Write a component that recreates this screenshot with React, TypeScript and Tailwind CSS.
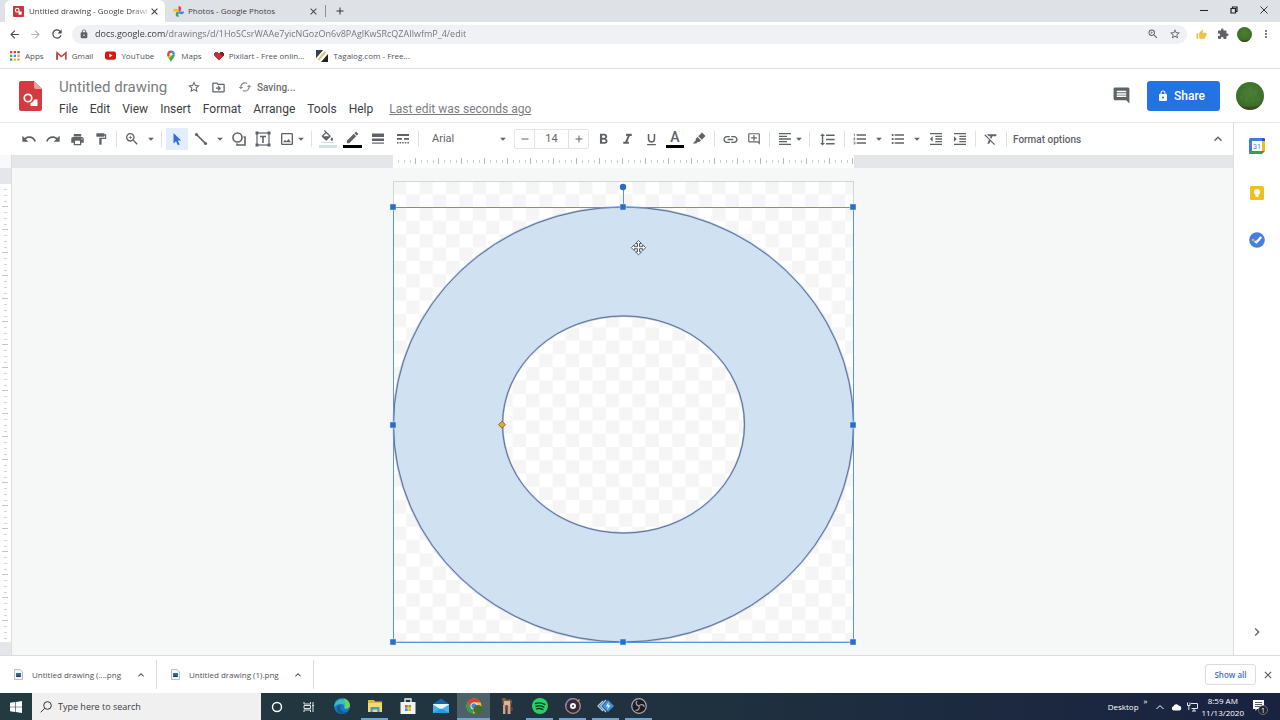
import React from 'react';
import {
  MdAdd,
  MdArrowBack,
  MdArrowDropDown,
  MdArrowForward,
  MdChevronRight,
  MdClose,
  MdComment,
  MdEdit,
  MdExpandLess,
  MdExtension,
  MdFormatAlignLeft,
  MdFormatBold,
  MdFormatClear,
  MdFormatColorFill,
  MdFormatIndentDecrease,
  MdFormatIndentIncrease,
  MdFormatItalic,
  MdFormatLineSpacing,
  MdFormatListBulleted,
  MdFormatListNumbered,
  MdFormatPaint,
  MdFormatUnderlined,
  MdLink,
  MdLock,
  MdMoreVert,
  MdOutlineAddComment,
  MdOutlineDriveFileMove,
  MdOutlineImage,
  MdPrint,
  MdRedo,
  MdRefresh,
  MdRemove,
  MdStarBorder,
  MdSync,
  MdThumbUp,
  MdUndo,
  MdZoomIn,
} from 'react-icons/md';

const bookmarks = [
  { label: 'Apps', icon: <AppsGrid /> },
  { label: 'Gmail', icon: <GmailLogo /> },
  { label: 'YouTube', icon: <YouTubeLogo /> },
  { label: 'Maps', icon: <MapsLogo /> },
  { label: 'Pixilart - Free onlin...', icon: <PixilartLogo /> },
  { label: 'Tagalog.com - Free...', icon: <TagalogLogo /> },
];

const menus = ['File', 'Edit', 'View', 'Insert', 'Format', 'Arrange', 'Tools', 'Help'];

const downloads = ['Untitled drawing (....png', 'Untitled drawing (1).png'];

/* ---------- logos ---------- */

function AppsGrid() {
  const colors = ['#db4437', '#db4437', '#c0392b', '#4caf50', '#4285f4', '#e8a33d', '#3c9a5f', '#e8b33d', '#e8a33d'];
  return (
    <svg viewBox="0 0 10 10" className="w-[10px] h-[10px]">
      {colors.map((c, i) => (
        <rect key={i} x={(i % 3) * 3.7} y={Math.floor(i / 3) * 3.7} width="2.3" height="2.3" fill={c} />
      ))}
    </svg>
  );
}

function GmailLogo() {
  return (
    <svg viewBox="0 0 12 10" className="w-[11px] h-[10px]">
      <path d="M1.2 9V1.6L6 5.6l4.8-4V9" fill="none" stroke="#d14836" strokeWidth="1.8" />
      <path d="M1.2 2.5V9" stroke="#b8483f" strokeWidth="1.8" />
    </svg>
  );
}

function YouTubeLogo() {
  return (
    <svg viewBox="0 0 12 9" className="w-[11px] h-[9px]">
      <rect width="12" height="9" rx="2.2" fill="#d9150f" />
      <path d="M4.7 2.4 8.2 4.5 4.7 6.6z" fill="#fff" />
    </svg>
  );
}

function MapsLogo() {
  return (
    <svg viewBox="0 0 10 12" className="w-[10px] h-3">
      <path d="M5 12C4.3 9.4 1.2 7.5 1.2 4.2h7.6C8.8 7.5 5.7 9.4 5 12z" fill="#34a853" />
      <path d="M1.2 4.2A3.8 3.8 0 0 1 5 .4v4.1L2.2 7a5 5 0 0 1-1-2.800z" fill="#ea4335" />
      <path d="M5 .4a3.8 3.8 0 0 1 3.8 3.8H5z" fill="#4285f4" />
      <path d="M2 6.7l3-2.900 1 1.600-2.700 3.200z" fill="#fbbc04" />
      <circle cx="5" cy="4.2" r="1.4" fill="#fff" />
    </svg>
  );
}

function PixilartLogo() {
  return (
    <svg viewBox="0 0 10 9" className="w-[10px] h-[9px]">
      <path d="M1 1h3v1h2V1h3v1h1v3H9v1H8v1H7v1H6v1H4V8H3V7H2V6H1V5H0V2h1z" fill="#c5303c" />
      <path d="M6 1h3v1h1v3H9L6 3z" fill="#7e2030" />
    </svg>
  );
}

function TagalogLogo() {
  return (
    <svg viewBox="0 0 12 12" className="w-3 h-3">
      <path d="M0 0h7L0 8z" fill="#26417a" />
      <path d="M2.5 0H7L0 8V5z" fill="#3d3d3d" />
      <path d="M8.5 1L10 3l-7 8-1.500-2z" fill="#d9c98a" />
      <path d="M12 4v8H5z" fill="#222" />
    </svg>
  );
}

function DrawingsFavicon() {
  return (
    <svg viewBox="0 0 12 12" className="w-[11px] h-[11px] shrink-0">
      <rect width="12" height="12" rx="1" fill="#c9373b" />
      <circle cx="4.6" cy="4.6" r="2" fill="none" stroke="#fff" strokeWidth="1.2" />
      <path d="M6 6h3.500v3.500H6z" fill="#fff" />
    </svg>
  );
}

function PhotosFavicon() {
  return (
    <svg viewBox="0 0 12 12" className="w-[11px] h-[11px] shrink-0">
      <path d="M6 0a3 3 0 0 1 0 6z" fill="#ea4335" />
      <path d="M12 6a3 3 0 0 1-6 0z" fill="#4285f4" />
      <path d="M6 12a3 3 0 0 1 0-6z" fill="#34a853" />
      <path d="M0 6a3 3 0 0 1 6 0z" fill="#fbbc04" />
    </svg>
  );
}

function DrawingsLogo() {
  return (
    <svg viewBox="0 0 23 30" className="w-[23px] h-[30px]">
      <path d="M2 0h13l8 8v20a2 2 0 0 1-2 2H2a2 2 0 0 1-2-2V2a2 2 0 0 1 2-2z" fill="#d23b40" />
      <path d="M15 0l8 8h-6a2 2 0 0 1-2-2z" fill="#efa3a0" />
      <circle cx="9" cy="17" r="3.7" fill="none" stroke="#fff" strokeWidth="1.7" />
      <path d="M18.500 18.500v6.500H11.500v-3a5.500 5.500 0 0 0 3.800-3.500z" fill="#fff" />
    </svg>
  );
}

function Avatar({ className }: { className: string }) {
  return (
    <svg viewBox="0 0 28 28" className={className}>
      <defs>
        <radialGradient id="grass" cx="50%" cy="40%" r="60%">
          <stop offset="0" stopColor="#4a8033" />
          <stop offset="0.8" stopColor="#3d6f2a" />
          <stop offset="1" stopColor="#345925" />
        </radialGradient>
      </defs>
      <circle cx="14" cy="14" r="14" fill="url(#grass)" />
      <path d="M5 24.500h18A14 14 0 0 1 5 24.500z" fill="#4b4429" />
      <path d="M8 8l1 3M14 5l1 4M19 9l1 4M10 16l1 3M17 17l1 3M5 14l1 3M22 16l1 3" stroke="#548a3a" strokeWidth="0.6" />
    </svg>
  );
}

/* ---------- toolbar glyphs ---------- */

function PointerIcon() {
  return (
    <svg viewBox="0 0 14 14" className="w-[14px] h-[14px]">
      <path d="M3.500 1v10.500L6 9.300l1.900 4 1.800-.8-1.900-3.900h3.400z" fill="#2f6fd8" />
    </svg>
  );
}

function LineIcon() {
  return (
    <svg viewBox="0 0 14 14" className="w-[14px] h-[14px]">
      <path d="M2.500 2.500l9 9" stroke="currentColor" strokeWidth="1.7" />
      <circle cx="2.5" cy="2.5" r="1.6" fill="currentColor" />
      <circle cx="11.5" cy="11.5" r="1.6" fill="currentColor" />
    </svg>
  );
}

function ShapeIcon() {
  return (
    <svg viewBox="0 0 14 14" className="w-[14px] h-[14px]" fill="none" stroke="currentColor" strokeWidth="1.6">
      <circle cx="5.5" cy="5.5" r="4.5" />
      <path d="M11.500 5H13v8H5v-1.500" />
    </svg>
  );
}

function TextBoxIcon() {
  return (
    <svg viewBox="0 0 16 16" className="w-4 h-4" fill="none" stroke="currentColor">
      <rect x="2" y="2" width="12" height="12" strokeWidth="1.2" />
      <path d="M5 5.500h6M8 5.500V12" strokeWidth="1.6" />
      <g fill="currentColor" stroke="none">
        <rect x="0.5" y="0.5" width="3" height="3" />
        <rect x="12.5" y="0.5" width="3" height="3" />
        <rect x="0.5" y="12.5" width="3" height="3" />
        <rect x="12.5" y="12.5" width="3" height="3" />
      </g>
    </svg>
  );
}

function WeightIcon() {
  return (
    <svg viewBox="0 0 12 12" className="w-3 h-3" fill="currentColor">
      <rect y="0.5" width="12" height="3.5" />
      <rect y="5.5" width="12" height="2.5" />
      <rect y="9.5" width="12" height="1.2" />
    </svg>
  );
}

function DashIcon() {
  return (
    <svg viewBox="0 0 12 12" className="w-3 h-3" fill="currentColor">
      <path d="M0 1h12v2H0zM0 5h5v1.800H0zM7 5h5v1.800H7zM0 9h1.500v1.500H0zM2.600 9h1.500v1.500H2.600zM5.200 9h1.500v1.500H5.200zM7.800 9h1.500v1.500H7.800zM10.400 9h1.500v1.500h-1.500z" />
    </svg>
  );
}

function HighlightIcon() {
  return (
    <svg viewBox="0 0 14 14" className="w-[14px] h-[14px]" fill="currentColor">
      <path d="M10 .5L13.500 4 9.800 7.700 6.300 4.200z" />
      <path d="M5.500 5L9 8.500l-1.800 1.600H5.500l-1.200 1.400H.8l2.900-3V6.700z" />
    </svg>
  );
}

function ToolButton({ label, className = 'w-6', children }: { label: string; className?: string; children: React.ReactNode }) {
  return (
    <button aria-label={label} className={`h-[22px] flex items-center justify-center shrink-0 ${className}`}>
      {children}
    </button>
  );
}

function Caret({ label, className = '' }: { label: string; className?: string }) {
  return (
    <button aria-label={label} className={`w-[14px] h-[22px] flex items-center justify-center shrink-0 ${className}`}>
      <MdArrowDropDown className="w-[14px] h-[14px] shrink-0" />
    </button>
  );
}

function Sep() {
  return <span className="w-px h-4 mx-[3px] bg-[#dfe1e5] shrink-0" />;
}

/* ---------- browser chrome ---------- */

function TabStrip() {
  return (
    <div className="h-[22px] bg-[#dee1e6] flex justify-between text-[8px] text-[#3f4246]">
      <div className="flex items-center pl-[5px]">
        <div className="w-[160px] h-full bg-white rounded-t-md flex items-center pl-2 pr-[5px]">
          <DrawingsFavicon />
          <span className="ml-[5px] flex-1 whitespace-nowrap [mask-image:linear-gradient(90deg,#000_85%,#0003)]">
            Untitled drawing - Google Drawi
          </span>
          <button aria-label="Close tab">
            <MdClose className="w-[11px] h-[11px] text-[#333]" />
          </button>
        </div>
        <div className="w-[160px] h-full flex items-center pl-2 pr-[6px]">
          <PhotosFavicon />
          <span className="ml-1 flex-1 whitespace-nowrap">Photos - Google Photos</span>
          <button aria-label="Close tab">
            <MdClose className="w-[11px] h-[11px] text-[#444]" />
          </button>
        </div>
        <span className="w-px h-3 bg-[#8d9095]" />
        <button aria-label="New tab" className="ml-2">
          <MdAdd className="w-3 h-3 text-[#333]" />
        </button>
      </div>
      <div className="flex items-center gap-[22px] pr-3 pb-[2px] text-[#222]">
        <button aria-label="Minimize">
          <svg viewBox="0 0 8 8" className="w-2 h-2">
            <path d="M0 4.500h8" stroke="currentColor" />
          </svg>
        </button>
        <button aria-label="Restore">
          <svg viewBox="0 0 8 8" className="w-2 h-2" fill="none" stroke="currentColor" strokeWidth="1.2">
            <path d="M1 2.500h4.500V7H1zM2.500 2.500V1H7v4.500H5.500" />
          </svg>
        </button>
        <button aria-label="Close window">
          <svg viewBox="0 0 8 8" className="w-2 h-2">
            <path d="M.5.5l7 7M7.500.5l-7 7" stroke="currentColor" strokeWidth="0.9" />
          </svg>
        </button>
      </div>
    </div>
  );
}

function AddressBar() {
  return (
    <div className="h-6 flex items-center bg-white pl-2 pr-2 text-[#5f6368]">
      <button aria-label="Back" className="mr-2">
        <MdArrowBack className="w-[13px] h-[13px] text-[#4a4d51]" />
      </button>
      <button aria-label="Forward" className="mr-2">
        <MdArrowForward className="w-[13px] h-[13px] text-[#b3b5b8]" />
      </button>
      <button aria-label="Reload" className="mr-2">
        <MdRefresh className="w-[14px] h-[14px] text-[#4a4d51]" />
      </button>
      <div className="flex-1 h-[19px] rounded-full bg-[#f0f1f4] flex items-center pl-[7px] pr-[6px]">
        <MdLock className="w-[10px] h-[10px]" />
        <input
          aria-label="Address"
          defaultValue="docs.google.com/drawings/d/1HoSCsrWAAe7yicNGozOn6v8PAglKwSRcQZAIlwfmP_4/edit"
          className="ml-[6px] flex-1 text-[9px] outline-none bg-[linear-gradient(90deg,#33363a_70px,#6c7075_70px)] bg-clip-text text-transparent"
        />
        <button aria-label="Zoom">
          <MdZoomIn className="w-3 h-3" />
        </button>
        <button aria-label="Bookmark this page" className="ml-[10px]">
          <MdStarBorder className="w-3 h-3" />
        </button>
      </div>
      <button aria-label="Thumbs up extension" className="ml-[9px]">
        <MdThumbUp className="w-[11px] h-[11px] text-[#efc04a]" />
      </button>
      <button aria-label="Extensions" className="ml-[10px]">
        <MdExtension className="w-3 h-3" />
      </button>
      <button aria-label="Profile" className="ml-2">
        <Avatar className="w-[15px] h-[15px]" />
      </button>
      <button aria-label="Browser menu" className="ml-2">
        <MdMoreVert className="w-3 h-3" />
      </button>
    </div>
  );
}

function BookmarksBar() {
  return (
    <nav className="h-[23px] flex items-center gap-3 pl-[10px] pb-[3px] bg-white border-b border-[#dcdee1] text-[8px] text-[#4f5257]">
      {bookmarks.map((b) => (
        <a key={b.label} href="#" className="flex items-center gap-[5px] whitespace-nowrap">
          {b.icon}
          {b.label}
        </a>
      ))}
    </nav>
  );
}

/* ---------- document ---------- */

function DocHeader() {
  return (
    <header className="h-[54px] flex items-center bg-white border-b border-[#e3e5e8] pl-[19px] pr-4 font-[Roboto,sans-serif]">
      <DrawingsLogo />
      <div className="ml-[17px] pt-1 flex flex-col gap-px">
        <div className="flex items-center h-[22px] text-[#5f6368]">
          <input
            aria-label="Document title"
            defaultValue="Untitled drawing"
            className="w-[120px] text-[15px] leading-5 text-[#7b7d80] outline-none"
          />
          <button aria-label="Star" className="ml-2">
            <MdStarBorder className="w-[14px] h-[14px]" />
          </button>
          <button aria-label="Move" className="ml-[10px]">
            <MdOutlineDriveFileMove className="w-[15px] h-[15px]" />
          </button>
          <MdSync className="ml-3 w-[14px] h-[14px] rotate-90 text-[#8b8e92]" />
          <span className="ml-[5px] text-[10px] font-medium text-[#6b6e72]">Saving...</span>
        </div>
        <nav className="flex items-center h-5 gap-3 text-[12px] text-[#3c4043]">
          {menus.map((m) => (
            <button key={m}>{m}</button>
          ))}
          <a href="#" className="ml-1 text-[#7b7d80] underline">
            Last edit was seconds ago
          </a>
        </nav>
      </div>
      <button aria-label="Open comment history" className="ml-auto">
        <MdComment className="w-[19px] h-[19px] text-[#5f6368]" />
      </button>
      <button className="ml-4 w-[73px] h-[30px] rounded-[3px] bg-[#2373e2] text-white text-[12px] font-medium flex items-center pl-[10px] gap-[5px]">
        <MdLock className="w-3 h-3" />
        Share
      </button>
      <button aria-label="Account" className="ml-4">
        <Avatar className="w-7 h-7" />
      </button>
    </header>
  );
}

function Toolbar() {
  return (
    <div className="h-8 flex items-center bg-white pl-[17px] pr-[7px] text-[#5f6368] font-[Roboto,sans-serif]">
      <ToolButton label="Undo"><MdUndo className="w-4 h-4" /></ToolButton>
      <ToolButton label="Redo"><MdRedo className="w-4 h-4" /></ToolButton>
      <ToolButton label="Print"><MdPrint className="w-[15px] h-[15px]" /></ToolButton>
      <ToolButton label="Paint format"><MdFormatPaint className="w-[14px] h-[14px]" /></ToolButton>
      <Sep />
      <ToolButton label="Zoom"><MdZoomIn className="w-4 h-4" /></ToolButton>
      <Caret label="Zoom levels" />
      <Sep />
      <ToolButton label="Select" className="w-6 px-px">
        <span className="flex h-full w-full items-center justify-center bg-[#e4edfb]"><PointerIcon /></span>
      </ToolButton>
      <ToolButton label="Line"><LineIcon /></ToolButton>
      <Caret label="Line types" />
      <ToolButton label="Shape"><ShapeIcon /></ToolButton>
      <ToolButton label="Text box"><TextBoxIcon /></ToolButton>
      <ToolButton label="Image"><MdOutlineImage className="w-4 h-4" /></ToolButton>
      <Caret label="Image sources" className="-ml-[5px]" />
      <Sep />
      <ToolButton label="Fill color" className="w-[25px] flex-col">
        <MdFormatColorFill className="w-[15px] h-[15px] [clip-path:inset(0_0_16%_0)]" />
        <span className="w-[18px] h-[3px] bg-[#cfe2f3]" />
      </ToolButton>
      <ToolButton label="Border color" className="w-[25px] flex-col">
        <MdEdit className="w-[15px] h-[15px]" />
        <span className="w-[19px] h-[3px] bg-black" />
      </ToolButton>
      <ToolButton label="Border weight" className="w-[25px]"><WeightIcon /></ToolButton>
      <ToolButton label="Border dash" className="w-[25px]"><DashIcon /></ToolButton>
      <Sep />
      <label className="w-[88px] h-[22px] flex items-center pl-[10px] shrink-0 text-[11px]">
        <select aria-label="Font" className="appearance-none flex-1 outline-none">
          <option>Arial</option>
        </select>
        <MdArrowDropDown className="w-[14px] h-[14px]" />
      </label>
      <div className="ml-1 mr-[2px] flex h-5 w-[75px] shrink-0 border border-[#e2e4e7] rounded-[2px]">
        <button aria-label="Decrease font size" className="w-[19px] flex items-center justify-center"><MdRemove className="w-3 h-3" /></button>
        <input aria-label="Font size" defaultValue="14" className="flex-1 min-w-0 border-x border-[#e2e4e7] text-center text-[11px] outline-none" />
        <button aria-label="Increase font size" className="w-[19px] flex items-center justify-center"><MdAdd className="w-3 h-3" /></button>
      </div>
      <ToolButton label="Bold"><MdFormatBold className="w-[17px] h-[17px]" /></ToolButton>
      <ToolButton label="Italic"><MdFormatItalic className="w-[17px] h-[17px]" /></ToolButton>
      <ToolButton label="Underline"><MdFormatUnderlined className="w-[15px] h-[15px]" /></ToolButton>
      <ToolButton label="Text color" className="w-6 flex-col">
        <span className="text-[14px] leading-[15px] font-medium">A</span>
        <span className="w-[18px] h-[3px] bg-black" />
      </ToolButton>
      <ToolButton label="Highlight color"><HighlightIcon /></ToolButton>
      <Sep />
      <ToolButton label="Insert link"><MdLink className="w-[17px] h-[17px]" /></ToolButton>
      <ToolButton label="Add comment"><MdOutlineAddComment className="w-[14px] h-[14px]" /></ToolButton>
      <Sep />
      <ToolButton label="Align"><MdFormatAlignLeft className="w-4 h-4" /></ToolButton>
      <Caret label="Align options" className="-ml-[5px]" />
      <Sep />
      <ToolButton label="Line spacing" className="w-7"><MdFormatLineSpacing className="w-[17px] h-[17px]" /></ToolButton>
      <Sep />
      <ToolButton label="Numbered list"><MdFormatListNumbered className="w-4 h-4" /></ToolButton>
      <Caret label="Numbered list options" />
      <ToolButton label="Bulleted list"><MdFormatListBulleted className="w-4 h-4" /></ToolButton>
      <Caret label="Bulleted list options" />
      <ToolButton label="Decrease indent"><MdFormatIndentDecrease className="w-4 h-4" /></ToolButton>
      <ToolButton label="Increase indent"><MdFormatIndentIncrease className="w-4 h-4" /></ToolButton>
      <Sep />
      <ToolButton label="Clear formatting"><MdFormatClear className="w-4 h-4" /></ToolButton>
      <Sep />
      <button className="ml-[3px] text-[10px] font-medium whitespace-nowrap">Format options</button>
      <button aria-label="Hide the menus" className="ml-auto">
        <MdExpandLess className="w-4 h-4" />
      </button>
    </div>
  );
}

function HorizontalRuler() {
  return (
    <svg className="w-[461px] h-[13px] bg-white shrink-0">
      <defs>
        <pattern id="hticks" width="23" height="13" patternUnits="userSpaceOnUse">
          <path d="M5.500 5v3M11.500 5v3M17.500 5v3" stroke="#ced0d3" />
          <path d="M22.500 3v6" stroke="#b6b8bb" />
        </pattern>
      </defs>
      <rect width="100%" height="100%" fill="url(#hticks)" />
    </svg>
  );
}

function VerticalRuler() {
  return (
    <svg className="w-full h-full bg-white">
      <defs>
        <pattern id="vticks" width="11" height="23" patternUnits="userSpaceOnUse">
          <path d="M4 5.500h3M4 11.500h3M4 17.500h3" stroke="#d3d5d8" />
          <path d="M2 22.500h6" stroke="#c3c5c8" />
        </pattern>
      </defs>
      <rect width="100%" height="100%" fill="url(#vticks)" />
    </svg>
  );
}

const RING =
  'M.5 243.500a230 217.500 0 1 0 460 0a230 217.500 0 1 0 -460 0zM109.500 243.500a121 108.500 0 1 1 242 0a121 108.500 0 1 1 -242 0z';

function Drawing() {
  const handles = [
    [0, 26], [230, 26], [460, 26],
    [0, 244], [460, 244],
    [0, 461], [230, 461], [460, 461],
  ];
  return (
    <svg viewBox="0 0 461 461" className="w-[461px] h-[461px] overflow-visible shrink-0">
      <defs>
        <pattern id="checker" width="26.6" height="26.6" patternUnits="userSpaceOnUse">
          <rect width="26.6" height="26.6" fill="#fff" />
          <path d="M0 0h13.300v13.300H0zM13.300 13.300h13.300v13.300H13.300z" fill="#f5f5f5" />
        </pattern>
      </defs>
      <rect x="0.5" y="0.5" width="460" height="460" fill="url(#checker)" stroke="#d3d5d6" />
      <path d={RING} fill="#d0e1f1" fillRule="evenodd" stroke="#a9c4e8" strokeWidth="2" />
      <path d={RING} fill="none" stroke="#5d6780" strokeWidth="0.9" />
      <path d="M.5 26.500h460v435H.5zM230.500 6v20" fill="none" stroke="#5b93dc" />
      <circle cx="230" cy="6" r="3.2" fill="#2a6dc9" />
      {handles.map(([x, y]) => (
        <rect key={`${x}-${y}`} x={x - 3} y={y - 3} width="6" height="6" fill="#2a6dc9" stroke="#dbe8f8" strokeWidth="0.5" />
      ))}
      <path d="M109 240.200l3.500 3.500-3.500 3.500-3.500-3.500z" fill="#dcae2c" stroke="#7a6424" strokeWidth="0.9" />
      {/* four way move cursor */}
      <path
        d="M245.500 59.500l3 3h-2v3.200h3.200v-2l3 3-3 3v-2h-3.200v3.200h2l-3 3-3-3h2v-3.200h-3.200v2l-3-3 3-3v2h3.200v-3.200h-2z"
        fill="#fff"
        stroke="#4a4d52"
        strokeWidth="0.9"
      />
    </svg>
  );
}

function Workspace() {
  return (
    <main className="flex-1 min-w-0 flex flex-col">
      <Toolbar />
      <div className="h-[13px] flex shrink-0">
        <span className="w-3 border-r border-[#dcdee1] bg-[#f8f9fa]" />
        <div className="flex-1 flex justify-center pl-[2px] bg-[#e5e6ea]">
          <HorizontalRuler />
        </div>
      </div>
      <div className="flex-1 flex">
        <div className="w-3 shrink-0 flex flex-col bg-[#e5e6ea] border-r border-[#dcdee1] pt-4 pb-[13px]">
          <div className="flex-1">
            <VerticalRuler />
          </div>
        </div>
        <div className="flex-1 flex justify-center bg-[#f6f8f8] pl-[2px] py-[13px]">
          <Drawing />
        </div>
      </div>
    </main>
  );
}

function SidePanel() {
  return (
    <aside className="w-[47px] shrink-0 flex flex-col items-center bg-white border-l border-[#dcdee1] pt-[15px] pb-[15px]">
      <div className="flex flex-col gap-[31px]">
        <button aria-label="Calendar">
          <svg viewBox="0 0 16 16" className="w-4 h-4">
            <rect width="16" height="16" rx="1.5" fill="#3f7de0" />
            <path d="M13 3h3v10h-3z" fill="#f2bc1d" />
            <path d="M0 13h13v3H1.500A1.500 1.500 0 0 1 0 14.500z" fill="#31a350" />
            <path d="M13 0h1.500A1.500 1.500 0 0 1 16 1.500V3h-3z" fill="#2457a8" />
            <path d="M13 13h3l-3 3z" fill="#d8483b" />
            <path d="M16 13v3h-3z" fill="#fff" />
            <rect x="3" y="3" width="10" height="10" fill="#fff" />
            <text x="8" y="10.7" textAnchor="middle" fontSize="7" fontFamily="Roboto, sans-serif" fill="#3f7de0">31</text>
          </svg>
        </button>
        <button aria-label="Keep">
          <svg viewBox="0 0 16 16" className="w-4 h-4">
            <rect x="1" y="1" width="14" height="14" rx="1.5" fill="#efbe22" />
            <circle cx="8" cy="7" r="3" fill="#fffbe8" />
            <path d="M6.500 9h3v3h-3z" fill="#fffbe8" />
          </svg>
        </button>
        <button aria-label="Tasks">
          <svg viewBox="0 0 16 16" className="w-4 h-4">
            <circle cx="8" cy="8" r="7.8" fill="#4680de" />
            <circle cx="4" cy="8" r="1.3" fill="#e3b63a" />
            <path d="M5.500 9l1.600 1.600" stroke="#c9dcf8" strokeWidth="2" />
            <path d="M6.800 11l5.400-6" stroke="#fff" strokeWidth="2.4" />
          </svg>
        </button>
      </div>
      <button aria-label="Hide side panel" className="mt-auto">
        <MdChevronRight className="w-4 h-4 text-[#5f6368]" />
      </button>
    </aside>
  );
}

/* ---------- bottom bars ---------- */

function DownloadsBar() {
  return (
    <div className="h-[38px] flex items-center bg-white border-t border-[#d9dbde] text-[8px] text-[#4f5257] pr-[6px]">
      {downloads.map((name) => (
        <div key={name} className="w-[157px] h-[29px] flex items-center pl-[14px] pr-[9px] border-r border-[#d9dbde]">
          <svg viewBox="0 0 9 11" className="w-[9px] h-[11px] shrink-0">
            <path d="M.5.5H6L8.500 3v7.500h-8z" fill="#f4f6f9" stroke="#a9b0ba" strokeWidth="0.8" />
            <rect x="2" y="4" width="5" height="4" fill="#2d6cb5" />
            <path d="M2 8l2-2 3 2z" fill="#243b53" />
          </svg>
          <button className="ml-[9px] flex-1 text-left whitespace-nowrap">{name}</button>
          <button aria-label="Download options">
            <MdExpandLess className="w-3 h-3" />
          </button>
        </div>
      ))}
      <button className="ml-auto w-[51px] h-[21px] border border-[#dadce0] rounded-[3px] text-[#4370c4] font-semibold">
        Show all
      </button>
      <button aria-label="Close downloads bar" className="ml-[6px]">
        <MdClose className="w-3 h-3" />
      </button>
    </div>
  );
}

const taskApps = [
  {
    name: 'Edge',
    art: (
      <>
        <circle cx="9" cy="9" r="8" fill="#1b78c8" />
        <path d="M1.500 8A8 8 0 0 1 17 8.500c0 3-4 4-6 2.500 1-1 .6-3.500-2-4-3-.5-6 .5-7.500 3z" fill="#36c2b4" />
        <path d="M10 1.200a8 8 0 0 1 7 7.300c0 2.500-3 3.500-5.500 2.800C13 8 13 4 10 1.200z" fill="#6bd45c" />
        <path d="M7 10c0 4 4 5.500 8 4.500-3 3.500-9 3-11-1-.8-3 1-5.500 4-5.500-.6.6-1 1.200-1 2z" fill="#155a9e" />
      </>
    ),
  },
  {
    name: 'File Explorer',
    running: true,
    art: (
      <>
        <path d="M2 3h6l1 1.500h7V15H2z" fill="#e5b541" />
        <path d="M2 6h14v9H2z" fill="#f7d775" />
        <path d="M4.500 15v-5h9v5h-2.200v-2.500H6.700V15z" fill="#4b9bc9" />
      </>
    ),
  },
  {
    name: 'Store',
    art: (
      <>
        <path d="M6 5V2h6v3" fill="none" stroke="#f2f2f2" strokeWidth="1.3" />
        <path d="M1.500 5h15v12h-15z" fill="#f2f2f2" />
        <path d="M6 8h2.700v2.700H6z" fill="#e8512f" />
        <path d="M9.300 8H12v2.700H9.300z" fill="#7fba00" />
        <path d="M6 11.300h2.700V14H6z" fill="#2d9fe0" />
        <path d="M9.300 11.300H12V14H9.300z" fill="#f5b400" />
      </>
    ),
  },
  {
    name: 'Mail',
    art: (
      <>
        <path d="M1 7l8-5.500L17 7v9H1z" fill="#1767b0" />
        <path d="M1 7h16v2l-8 4-8-4z" fill="#e8f4fb" />
        <path d="M1 7.500l8 5 8-5V16H1z" fill="#41b4ea" />
        <path d="M1 16l8-4.500 8 4.500z" fill="#2b97dc" />
      </>
    ),
  },
  {
    name: 'Chrome',
    running: true,
    active: true,
    art: (
      <>
        <circle cx="9" cy="9" r="7.5" fill="#f3c22c" />
        <path d="M2.500 5.300a7.500 7.500 0 0 1 13 0H9l-3 5.400z" fill="#dc4336" />
        <path d="M2.500 5.300L6 10.700l3 1.800-1.200 3.900A7.500 7.500 0 0 1 2.500 5.300z" fill="#2f9e50" />
        <circle cx="9" cy="9" r="3.5" fill="#fff" />
        <circle cx="9" cy="9" r="2.7" fill="#4384ee" />
        <circle cx="13" cy="12.5" r="4.6" fill="#42702c" />
      </>
    ),
  },
  {
    name: 'Game',
    art: (
      <>
        <path d="M4 1h3l2 2 3-1 2 2-1 5H5z" fill="#8a5a41" />
        <path d="M6 4h6v5H6z" fill="#d8b49a" />
        <path d="M5 8h2.500v9H5zM9.500 8h3v9h-3z" fill="#c9a48c" />
        <path d="M7.500 8h2v5h-2z" fill="#6d4638" />
        <path d="M13 10h2v4h-2z" fill="#75343a" />
      </>
    ),
  },
  {
    name: 'Spotify',
    running: true,
    art: (
      <>
        <circle cx="9" cy="9" r="8" fill="#27d365" />
        <path d="M4.500 6.500c3-1 6.500-.7 9.300.9M5 9.300c2.500-.8 5.500-.5 7.800.8M5.500 11.900c2-.6 4.500-.4 6.300.7" fill="none" stroke="#16332a" strokeWidth="1.4" strokeLinecap="round" />
      </>
    ),
  },
  {
    name: 'Groove',
    running: true,
    art: (
      <>
        <circle cx="9" cy="9" r="7.3" fill="#2f2c3a" stroke="#b88a90" strokeWidth="1.3" />
        <path d="M9 1.700A7.300 7.300 0 0 0 1.700 9" fill="none" stroke="#8a7cc0" strokeWidth="1.3" />
        <path d="M13.500 4.500l2-2" stroke="#e69560" strokeWidth="1.5" />
        <circle cx="9" cy="9" r="3" fill="#f4f1f2" />
        <circle cx="9" cy="9" r="1" fill="#2f2c3a" />
      </>
    ),
  },
  {
    name: 'Sync',
    running: true,
    art: (
      <>
        <path d="M6 4L1 9l5 5M9 3L3.500 9 9 15" fill="none" stroke="#a8cdea" strokeWidth="1.3" />
        <path d="M11 3l6 6-6 6-6-6z" fill="#3f93dc" />
        <path d="M11.500 5L9 9.500h2L10 13l3.500-4.700h-2z" fill="#d9eeff" />
      </>
    ),
  },
  {
    name: 'OBS',
    running: true,
    art: (
      <>
        <circle cx="9" cy="9" r="7.3" fill="#1d1d21" stroke="#a9adb3" strokeWidth="1.2" />
        <path d="M9 9c-3-.5-3.500-3-2-5M9 9c2-2.200 4.800-1.500 5.300.8M9 9c1 2.800-1 4.800-3.500 4.200" fill="none" stroke="#9da0a6" strokeWidth="1.3" />
      </>
    ),
  },
];

function Taskbar() {
  return (
    <footer className="h-[27px] flex items-stretch bg-gradient-to-r from-[#233a40] via-[#20323f] to-[#192240] text-white">
      <button aria-label="Start" className="w-8 flex items-center justify-center">
        <svg viewBox="0 0 12 12" className="w-3 h-3" fill="#fff">
          <path d="M0 1.700L5.200 1v4.700H0zM5.800.9L12 0v5.700H5.800zM0 6.300h5.200V11L0 10.300zM5.800 6.300H12V12l-6.200-.9z" />
        </svg>
      </button>
      <label className="w-[229px] flex items-center pl-2 bg-[#f0f0f0]">
        <svg viewBox="0 0 12 12" className="w-3 h-3 shrink-0" fill="none" stroke="#333">
          <circle cx="7.5" cy="4.5" r="3.8" />
          <path d="M4.700 7.300l-4 4" />
        </svg>
        <input
          aria-label="Search"
          placeholder="Type here to search"
          className="ml-[6px] flex-1 text-[9px] outline-none placeholder:text-[#3c3c3c]"
        />
      </label>
      <button aria-label="Cortana" className="w-8 flex items-center justify-center">
        <svg viewBox="0 0 12 12" className="w-3 h-3">
          <circle cx="6" cy="6" r="4.5" fill="none" stroke="#fff" strokeWidth="1.4" />
        </svg>
      </button>
      <button aria-label="Task view" className="w-8 flex items-center justify-center">
        <svg viewBox="0 0 12 12" className="w-3 h-3" fill="none" stroke="#dfe3e6">
          <path d="M1 1v2h6.500V1M1 11V9h6.500v2M1 4.500h6.500v3H1zM10 1v10M9 4.500h2" />
        </svg>
      </button>
      <div className="flex">
        {taskApps.map((app) => (
          <button
            key={app.name}
            aria-label={app.name}
            className={`w-[33px] flex flex-col items-center justify-between pt-1 ${app.active ? 'bg-[#4f6168]' : ''}`}
          >
            <svg viewBox="0 0 18 18" className="w-[18px] h-[18px]">
              {app.art}
            </svg>
            {app.running && <span className={`h-[2px] bg-[#6ba6d6] ${app.active ? 'w-full' : 'w-[27px]'}`} />}
          </button>
        ))}
      </div>
      <div className="ml-auto flex items-center pr-3 text-[8px]">
        <span>Desktop</span>
        <span className="ml-[5px] pb-3">»</span>
        <button aria-label="Hidden icons" className="ml-2">
          <svg viewBox="0 0 8 8" className="w-2 h-2">
            <path d="M.5 6L4 2.500 7.500 6" fill="none" stroke="#fff" />
          </svg>
        </button>
        <svg viewBox="0 0 10 8" className="ml-[7px] w-[11px] h-2" fill="#fff">
          <path d="M2.300 7.500a2.200 2.200 0 0 1-.3-4.300 3 3 0 0 1 5.500-.4A2.400 2.400 0 0 1 8 7.500z" />
        </svg>
        <svg viewBox="0 0 11 10" className="ml-[5px] w-[11px] h-[10px]" fill="none" stroke="#e6e9ee">
          <path d="M4 1.500h6.500v5H4.500M5 9h4M7 6.500V9M.5.500v3H3v-3M1.800 3.500V8" />
        </svg>
        <div className="ml-1 flex flex-col items-center leading-3 whitespace-nowrap">
          <span>8:59 AM</span>
          <span>11/13/2020</span>
        </div>
        <button aria-label="Notifications" className="ml-2">
          <svg viewBox="0 0 16 16" className="w-4 h-4">
            <path d="M1 1h11v9H5l-1.500 2v-2H1z" fill="#fff" />
            <path d="M3 3.500h7M3 5.500h7M3 7.500h5" stroke="#2a3246" strokeWidth="0.8" />
            <circle cx="11" cy="11" r="4.5" fill="#20242c" stroke="#8a8f99" strokeWidth="0.7" />
            <text x="11" y="13.5" textAnchor="middle" fontSize="7" fill="#fff">1</text>
          </svg>
        </button>
      </div>
    </footer>
  );
}

const App: React.FC = () => {
  return (
    <div className="min-h-screen flex flex-col bg-white font-['Open_Sans','Noto_Sans',sans-serif]">
      <TabStrip />
      <AddressBar />
      <BookmarksBar />
      <DocHeader />
      <div className="flex-1 flex">
        <Workspace />
        <SidePanel />
      </div>
      <DownloadsBar />
      <Taskbar />
    </div>
  );
};

export default App;
